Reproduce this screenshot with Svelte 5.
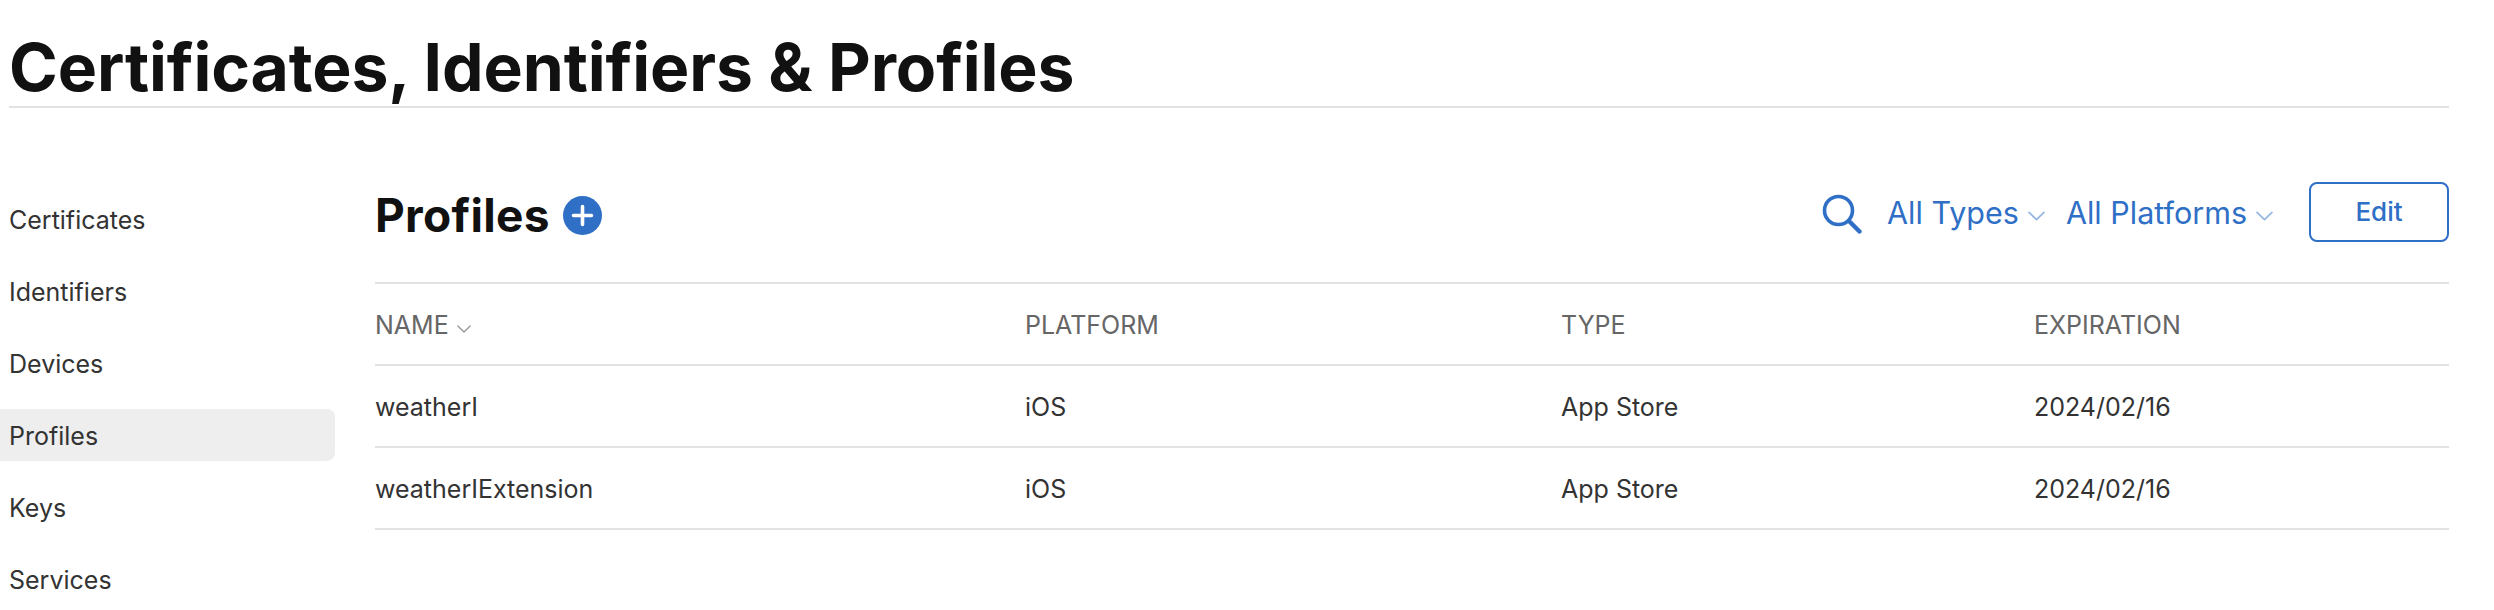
<script>
	const nav = ['Certificates', 'Identifiers', 'Devices', 'Profiles', 'Keys', 'Services'];
	const rows = [
		{ name: 'weatherI', platform: 'iOS', type: 'App Store', expiration: '2024/02/16' },
		{ name: 'weatherIExtension', platform: 'iOS', type: 'App Store', expiration: '2024/02/16' }
	];
</script>

{#snippet chevron(w, h)}
	<svg class="chevron" width={w} height={h} viewBox="0 0 16 9" fill="none">
		<path d="M1 1l7 7 7-7" stroke="currentColor" stroke-width="1.6" stroke-linecap="round" stroke-linejoin="round" />
	</svg>
{/snippet}

<div class="page">
	<header class="top">
		<h1>Certificates, Identifiers &amp; Profiles</h1>
	</header>

	<div class="body">
		<nav class="sidebar">
			{#each nav as item}
				<a href="#top" class="nav-item" class:active={item === 'Profiles'}>{item}</a>
			{/each}
		</nav>

		<main class="content">
			<div class="toolbar">
				<div class="heading">
					<h2>Profiles</h2>
					<svg class="add" width="39" height="39" viewBox="0 0 39 39">
						<circle cx="19.5" cy="19.5" r="19.5" fill="#2f6fc6" />
						<path d="M19.5 10.5v18M10.5 19.5h18" stroke="#fff" stroke-width="3.6" stroke-linecap="round" />
					</svg>
				</div>
				<div class="filters">
					<svg class="search" width="40" height="40" viewBox="0 0 40 40" fill="none">
						<circle cx="16.5" cy="16.5" r="14" stroke="currentColor" stroke-width="3.6" />
						<path d="M27 27l10.5 10.5" stroke="currentColor" stroke-width="4.4" stroke-linecap="round" />
					</svg>
					<span class="filter types">All Types {@render chevron(17, 10)}</span>
					<span class="filter platforms">All Platforms {@render chevron(17, 10)}</span>
					<button class="edit">Edit</button>
				</div>
			</div>

			<div class="table">
				<div class="row head">
					<div>NAME {@render chevron(14, 8)}</div>
					<div>PLATFORM</div>
					<div>TYPE</div>
					<div>EXPIRATION</div>
				</div>
				{#each rows as row}
					<div class="row">
						<div>{row.name}</div>
						<div>{row.platform}</div>
						<div>{row.type}</div>
						<div>{row.expiration}</div>
					</div>
				{/each}
			</div>
		</main>
	</div>
</div>

<style>
	:global(body) {
		margin: 0;
		background: #fff;
		font-family: Inter, "Liberation Sans", sans-serif;
		overflow: hidden;
	}

	.page {
		width: 2494px;
		height: 610px;
		overflow: hidden;
	}

	.top {
		margin: 0 45px 0 9px;
		height: 106px;
		border-bottom: 2px solid #e2e2e2;
	}

	h1 {
		margin: 0;
		padding-top: 25px;
		font-size: 66px;
		line-height: 84px;
		font-weight: 700;
		letter-spacing: -0.12px;
		color: #111;
		white-space: nowrap;
	}

	.body {
		display: flex;
		padding-right: 45px;
	}

	.sidebar {
		width: 335px;
		flex: none;
		display: flex;
		flex-direction: column;
		gap: 20px;
		padding-top: 85px;
	}

	.nav-item {
		height: 52px;
		box-sizing: border-box;
		display: flex;
		align-items: center;
		padding: 2px 0 0 9px;
		border-radius: 0 8px 8px 0;
		font-size: 25px;
		color: #333;
		text-decoration: none;
	}

	.nav-item.active {
		background: #eee;
	}

	.content {
		flex: 1;
		margin-left: 40px;
		min-width: 0;
	}

	.toolbar {
		height: 174px;
		box-sizing: border-box;
		padding-top: 74px;
		display: flex;
		justify-content: space-between;
		align-items: flex-start;
	}

	.heading {
		display: flex;
		align-items: center;
		gap: 13px;
		height: 60px;
		padding-top: 3px;
	}

	h2 {
		margin: 0;
		font-size: 46px;
		font-weight: 700;
		color: #111;
		letter-spacing: 0.3px;
	}

	.add {
		margin-top: 1px;
	}

	.filters {
		display: flex;
		align-items: center;
		height: 60px;
		color: #2f6fc6;
	}

	.search {
		margin-top: 3px;
	}

	.filter {
		font-size: 30.5px;
		display: inline-flex;
		align-items: center;
		gap: 9px;
		white-space: nowrap;
		padding-top: 1px;
	}

	.types {
		margin-left: 25px;
	}

	.platforms {
		margin-left: 21px;
	}

	.filter .chevron {
		opacity: 0.5;
		margin-top: 6px;
	}

	.edit {
		margin-left: 36px;
		width: 140px;
		height: 60px;
		border: 2px solid #2f6fc6;
		border-radius: 8px;
		background: #fff;
		color: #2f6fc6;
		font: 500 26px Inter, "Liberation Sans", sans-serif;
		padding: 0 0 2px;
	}

	.table {
		border-top: 2px solid #e2e2e2;
	}

	.row {
		display: grid;
		grid-template-columns: 650px 536px 473px 1fr;
		align-items: center;
		height: 78px;
		padding-top: 2px;
		border-bottom: 2px solid #e2e2e2;
		font-size: 25px;
		color: #333;
	}

	.row.head {
		color: #666;
	}

	.head .chevron {
		color: #999;
		margin-left: 1px;
		vertical-align: 1px;
	}
</style>
